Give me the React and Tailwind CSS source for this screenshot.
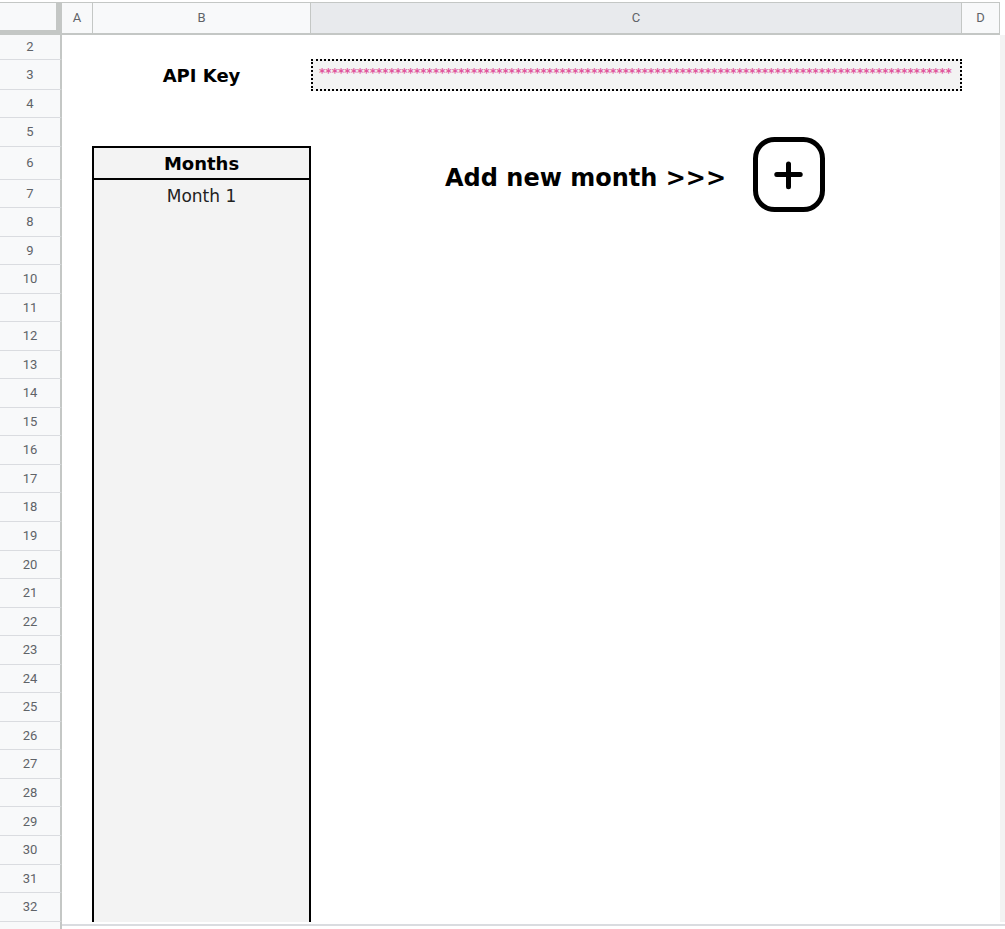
import React from "react";

// row number -> height class (rows 2-7 were resized by hand, the rest are default)
const ROW_HEIGHTS = {
  2: "h-[25px]",
  3: "h-[30px]",
  4: "h-[28px]",
  5: "h-[29px]",
  6: "h-[33px]",
  7: "h-[28px]",
};

const ROWS = Array.from({ length: 31 }, (_, i) => i + 2);

// masked key, one star per character
const API_KEY_MASK = Array.from({ length: 100 }, (_, i) => i);

const PlusButton = () => (
  <svg width="72" height="75" viewBox="0 0 72 75" fill="none" stroke="#000" strokeLinecap="round">
    <rect x="2.5" y="2.5" width="67" height="70" rx="19" strokeWidth="5" />
    <line x1="23.8" y1="37.5" x2="47.2" y2="37.5" strokeWidth="5" />
    <line x1="35.5" y1="27" x2="35.5" y2="49.8" strokeWidth="5" />
  </svg>
);

const ColumnB = ({ n }) => {
  if (n === 3) {
    return (
      <div className="w-[219px] shrink-0 flex items-center justify-center text-[18px] font-bold text-black">
        API Key
      </div>
    );
  }
  if (n === 6) {
    return (
      <div className="w-[219px] shrink-0 -mt-px border-2 border-black bg-[#f3f3f3] flex items-center justify-center text-[18px] font-bold text-black">
        Months
      </div>
    );
  }
  if (n > 6) {
    return (
      <div className="w-[219px] shrink-0 border-x-2 border-black bg-[#f3f3f3] flex items-center justify-center pt-[5px] text-[17px] text-[#222]">
        {n === 7 ? "Month 1" : null}
      </div>
    );
  }
  return <div className="w-[219px] shrink-0" />;
};

const ColumnC = ({ n }) => {
  if (n === 3) {
    return (
      <div className="w-[651px] shrink-0 -my-px border-2 border-dotted border-black bg-[#f3f3f3] flex items-center pl-[6px] pb-[4px] overflow-hidden">
        <div className="flex text-[12px] font-bold leading-none text-[#e0559b]">
          {API_KEY_MASK.map((i) => (
            <span key={i} className="w-[6.33px] shrink-0 text-center">
              *
            </span>
          ))}
        </div>
      </div>
    );
  }
  return <div className="w-[651px] shrink-0" />;
};

const SheetRow = ({ n }) => (
  <div className={`flex ${ROW_HEIGHTS[n] || "h-[28.56px]"}`}>
    <div className="w-[62px] shrink-0 bg-[#f8f9fa] border-r-2 border-r-[#c4c7c5] border-b border-b-[#dadce0] flex items-center justify-center font-['Roboto',sans-serif] text-[13px] text-[#5f6368]">
      {n}
    </div>
    <div className="w-[30px] shrink-0" />
    <ColumnB n={n} />
    <ColumnC n={n} />
    <div className="w-[38px] shrink-0" />
    <div className="w-[5px] shrink-0 bg-[#f3f3f3]" />
  </div>
);

const App = () => {
  return (
    <div className="relative w-[1005px] h-[929px] overflow-hidden bg-white pt-[2px] font-['DejaVu_Sans',sans-serif]">
      {/* column headers */}
      <div className="flex h-[33px] font-['Roboto',sans-serif] text-[13px] text-[#5f6368]">
        <div className="w-[62px] shrink-0 bg-[#f8f9fa] border-t border-r-[6px] border-b-[5px] border-[#c4c7c5]" />
        <div className="w-[31px] shrink-0 bg-[#f8f9fa] border-t border-r border-b-2 border-[#c4c7c5] flex items-center justify-center">
          A
        </div>
        <div className="w-[218px] shrink-0 bg-[#f8f9fa] border-t border-r border-b-2 border-[#c4c7c5] flex items-center justify-center">
          B
        </div>
        <div className="w-[651px] shrink-0 bg-[#e8eaed] border-t border-r border-b-2 border-[#c4c7c5] flex items-center justify-center">
          C
        </div>
        <div className="w-[38px] shrink-0 bg-[#f8f9fa] border-t border-r border-b-2 border-[#c4c7c5] flex items-center justify-center">
          D
        </div>
      </div>

      {ROWS.map((n) => (
        <SheetRow key={n} n={n} />
      ))}

      {/* horizontal scrollbar edge */}
      <div className="flex h-[7px]">
        <div className="w-[62px] shrink-0 bg-[#f8f9fa] border-r-2 border-[#c4c7c5]" />
        <div className="flex-1 mt-[2px] border-t-2 border-[#dadce0]" />
      </div>

      {/* floating drawing over the grid */}
      <div className="absolute left-[445px] top-[137px] w-[380px] h-[75px] flex items-center justify-between">
        <span className="pt-[6px] text-[24px] font-bold text-black leading-none">Add new month &gt;&gt;&gt;</span>
        <PlusButton />
      </div>
    </div>
  );
};

export default App;
